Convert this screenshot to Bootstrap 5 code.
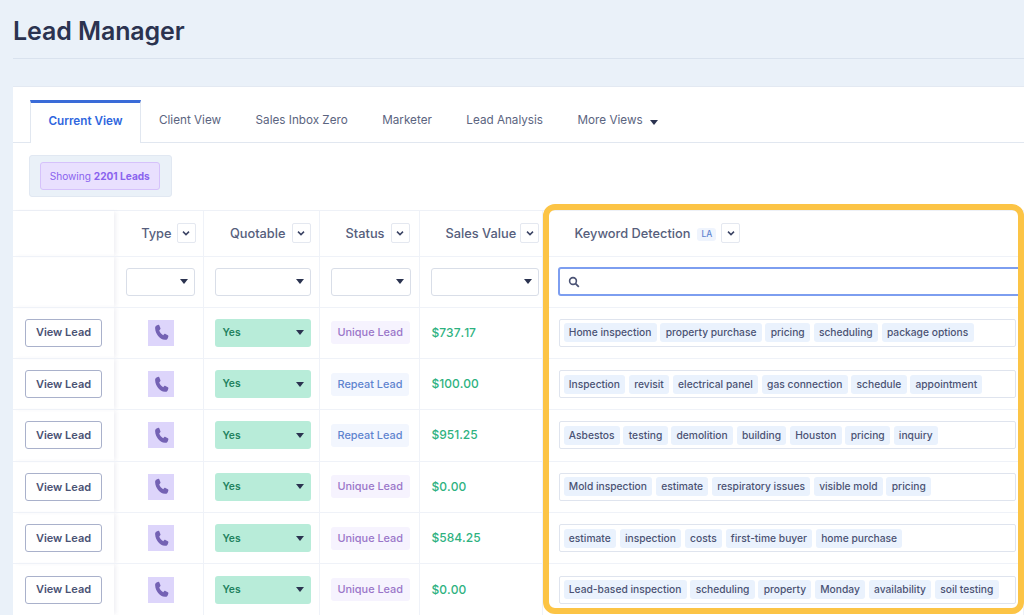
<!DOCTYPE html>
<html lang="en">
<head>
<meta charset="utf-8">
<title>Lead Manager</title>
<link href="https://cdn.jsdelivr.net/npm/bootstrap@5.3.0/dist/css/bootstrap.min.css" rel="stylesheet">
<style>
html,body{height:615px;overflow:hidden}
body{background:#eaf1f9;font-family:Inter,"Liberation Sans",sans-serif;color:#4a5274;position:relative}
.page-head{margin-left:13px;height:59px;border-bottom:1px solid #d9e2ee;display:flex;align-items:flex-start}
.page-head h1{font-size:25px;line-height:30px;font-weight:600;color:#2b3350;margin:16px 0 0;letter-spacing:-.1px}
.panel{margin:27px 0 0 13px;background:#fff;border-top:1px solid #e3e9f2;height:529px;overflow:hidden}
.view-tabs{padding:13px 0 0 17px;height:56px;border-bottom:1px solid #e1e7f0;flex-wrap:nowrap}
.view-tabs .nav-link{border:0;border-radius:0;padding:0;height:41px;display:flex;align-items:center;font-size:11.7px;color:#5b6480;background:none;margin-right:34.5px;white-space:nowrap}
.view-tabs .nav-link.active{width:111px;height:43px;margin-right:18px;justify-content:center;font-weight:600;color:#2f66de;border:1px solid #e1e7f0;border-bottom:0;border-top:3px solid #3a6bd8;background:#fff;padding-bottom:2px}
.caret-dn{display:inline-block;border:4px solid transparent;border-top:5px solid #2b3350;border-bottom:0}
.more-caret{margin-left:7px;margin-top:4px}
.count-wrap{margin:12px 0 0 16px;display:inline-block;background:#eaf1f8;border:1px solid #e1e8f2;border-radius:3px;padding:6px 11px 6px 10px}
.count-box{display:block;background:#e9e0fe;border:1px solid #d6c2fb;border-radius:3px;color:#8a63ee;font-size:10.1px;line-height:26px;padding:0 8.800px}
.count-box b{font-weight:700}
.grid-wrap{margin-top:13px;border-top:1px solid #eef1f7}
.lead-grid{table-layout:fixed;width:1011px;border-collapse:collapse;margin:0}
.lead-grid td,.lead-grid th{border-bottom:1px solid #eff2f8;border-right:1px solid #eff2f8;padding:0;vertical-align:middle;font-weight:400}
.lead-grid tr{height:51.4px}
.lead-grid tr.hd-row{height:45px}
.lead-grid tr.flt-row{height:51px}
.lead-grid .first{border-right:0;box-shadow:3px 0 4px -1px rgba(60,70,110,.08)}
.hd-cell{display:flex;align-items:center;justify-content:flex-end;gap:6px;padding-right:8px;font-size:12.8px;font-weight:500;color:#565e7c;height:100%}
.hd-type{padding-right:7px;gap:5px}
.hd-status{padding-right:9px}
.hd-sales{justify-content:flex-start;padding:0 0 0 26px;white-space:nowrap;gap:4px}
.hd-btn{width:19px;height:20px;border:1px solid #e4e8f0;border-radius:2px;background:#fff;display:flex;align-items:center;justify-content:center;padding:0;flex:none}
.flt-sel{height:28px;border:1px solid #d9dee8;border-radius:3px;background:#fff;display:flex;align-items:center;justify-content:flex-end;padding-right:6px;margin:0 8px 0 11px}
.flt-type{margin-left:12px}
.flt-sales{margin-right:3px}
.view-btn{width:77px;height:28px;margin-left:12px;padding:0;font-size:11px;font-weight:600;color:#4a5274;border:1px solid #a9b1cb;border-radius:3px;background:#fff;display:flex;align-items:center;justify-content:center}
.phone-tile{width:26px;height:26px;background:#ddd5fb;display:flex;align-items:center;justify-content:center;margin-left:34px}
.yes-sel{height:28px;margin:0 8px 0 11px;background:#b8ecd9;border-radius:3px;display:flex;align-items:center;justify-content:space-between;padding:0 7px 0 8px;font-size:10.3px;font-weight:600;color:#23825f}
.lead-tag{display:block;width:fit-content;margin-left:11.5px;padding:0 6.5px;line-height:23px;border-radius:3px;font-size:10.9px;font-weight:500}
.tag-unique{background:#f6f3fe;color:#9a76c9}
.tag-repeat{background:#f2f6fe;color:#5f84cf}
.lead-grid td.money{padding-left:12px;font-size:12px;font-weight:500;color:#2eb27f;font-kerning:none}
.kw-hd{display:flex;align-items:center;padding:0 0 0 32px;font-size:12.8px;font-weight:500;color:#565e7c;height:100%}
.la-tag{font-size:8.5px;color:#5f84cf;background:#eff4fd;border-radius:3px;line-height:13px;padding:0 4px;margin:2px 5px 0 7px}
.kw-search{margin:0 -14px 0 15px;height:29px;border:2px solid #7d9ef0;border-radius:3px;background:#fff;display:flex;align-items:center;padding-left:8px}
.kw-box{margin:0 7px 0 16px;height:28px;border:1px solid #dfe4ee;border-radius:2px;display:flex;align-items:center;gap:3.6px;padding-left:4px;white-space:nowrap;overflow:hidden}
.kw{background:#eaf2fd;color:#4a5274;font-size:10.25px;font-weight:500;line-height:19px;padding:0 5.3px;border-radius:3px;flex:none}
.focus-frame{position:absolute;left:543px;top:204px;width:481px;height:410px;border:6px solid #fcc445;border-radius:12px;pointer-events:none}
</style>
</head>
<body>
<svg width="0" height="0" class="position-absolute"><defs>
<symbol id="ph" viewBox="0 0 16 16"><path d="M3.400 1.300 5 .8c.4-.1.8.1 1 .5l1 2.700c.2.400.1.800-.2 1L5.900 6.200c.6 1.900 2 3.500 3.700 4.400l1-1.100c.3-.3.700-.4 1.100-.2l2.300 1.200c.4.200.6.600.5 1l-.5 1.600c-.4 1.200-1.400 2-2.700 1.800C6.300 14.700 2.300 9.500 2 4.100c-.1-1.200.3-2.400 1.400-2.800z" fill="#7462b4"/></symbol>
<symbol id="chev" viewBox="0 0 10 10"><path d="M2 3.600 5 6.600 8 3.600" fill="none" stroke="#3b4464" stroke-width="1.500"/></symbol>
</defs></svg>

<header class="page-head"><h1>Lead Manager</h1></header>

<main class="panel">
  <ul class="nav nav-tabs view-tabs">
    <li class="nav-item"><a class="nav-link active" href="#">Current View</a></li>
    <li class="nav-item"><a class="nav-link" href="#">Client View</a></li>
    <li class="nav-item"><a class="nav-link" href="#">Sales Inbox Zero</a></li>
    <li class="nav-item"><a class="nav-link" href="#">Marketer</a></li>
    <li class="nav-item"><a class="nav-link" href="#">Lead Analysis</a></li>
    <li class="nav-item"><a class="nav-link" href="#">More Views<span class="caret-dn more-caret"></span></a></li>
  </ul>
  <div class="count-wrap"><span class="count-box">Showing <b>2201 Leads</b></span></div>
  <div class="grid-wrap">
  <table class="lead-grid">
    <colgroup><col style="width:101px"><col style="width:89px"><col style="width:116px"><col style="width:100px"><col style="width:123px"><col></colgroup>
    <thead>
      <tr class="hd-row">
        <th class="first"></th>
        <th><div class="hd-cell hd-type">Type<span class="hd-btn"><svg width="10" height="10"><use href="#chev"/></svg></span></div></th>
        <th><div class="hd-cell">Quotable<span class="hd-btn"><svg width="10" height="10"><use href="#chev"/></svg></span></div></th>
        <th><div class="hd-cell hd-status">Status<span class="hd-btn"><svg width="10" height="10"><use href="#chev"/></svg></span></div></th>
        <th><div class="hd-cell hd-sales">Sales Value<span class="hd-btn"><svg width="10" height="10"><use href="#chev"/></svg></span></div></th>
        <th><div class="kw-hd">Keyword Detection<span class="la-tag">LA</span><span class="hd-btn"><svg width="10" height="10"><use href="#chev"/></svg></span></div></th>
      </tr>
      <tr class="flt-row">
        <td class="first"></td>
        <td><div class="flt-sel flt-type"><span class="caret-dn"></span></div></td>
        <td><div class="flt-sel"><span class="caret-dn"></span></div></td>
        <td><div class="flt-sel"><span class="caret-dn"></span></div></td>
        <td><div class="flt-sel flt-sales"><span class="caret-dn"></span></div></td>
        <td><div class="kw-search"><svg width="12" height="12" viewBox="0 0 12 12"><circle cx="5" cy="5" r="3.400" fill="none" stroke="#4a5274" stroke-width="1.600"/><path d="M7.600 7.600 10.800 10.800" stroke="#4a5274" stroke-width="1.800"/></svg></div></td>
      </tr>
    </thead>
    <tbody>
      <tr>
        <td class="first"><button class="view-btn">View Lead</button></td>
        <td><div class="phone-tile"><svg width="17" height="17"><use href="#ph"/></svg></div></td>
        <td><div class="yes-sel">Yes<span class="caret-dn"></span></div></td>
        <td><span class="lead-tag tag-unique">Unique Lead</span></td>
        <td class="money">$737.17</td>
        <td><div class="kw-box"><span class="kw">Home inspection</span><span class="kw">property purchase</span><span class="kw">pricing</span><span class="kw">scheduling</span><span class="kw">package options</span></div></td>
      </tr>
      <tr>
        <td class="first"><button class="view-btn">View Lead</button></td>
        <td><div class="phone-tile"><svg width="17" height="17"><use href="#ph"/></svg></div></td>
        <td><div class="yes-sel">Yes<span class="caret-dn"></span></div></td>
        <td><span class="lead-tag tag-repeat">Repeat Lead</span></td>
        <td class="money">$100.00</td>
        <td><div class="kw-box"><span class="kw">Inspection</span><span class="kw">revisit</span><span class="kw">electrical panel</span><span class="kw">gas connection</span><span class="kw">schedule</span><span class="kw">appointment</span></div></td>
      </tr>
      <tr>
        <td class="first"><button class="view-btn">View Lead</button></td>
        <td><div class="phone-tile"><svg width="17" height="17"><use href="#ph"/></svg></div></td>
        <td><div class="yes-sel">Yes<span class="caret-dn"></span></div></td>
        <td><span class="lead-tag tag-repeat">Repeat Lead</span></td>
        <td class="money">$951.25</td>
        <td><div class="kw-box"><span class="kw">Asbestos</span><span class="kw">testing</span><span class="kw">demolition</span><span class="kw">building</span><span class="kw">Houston</span><span class="kw">pricing</span><span class="kw">inquiry</span></div></td>
      </tr>
      <tr>
        <td class="first"><button class="view-btn">View Lead</button></td>
        <td><div class="phone-tile"><svg width="17" height="17"><use href="#ph"/></svg></div></td>
        <td><div class="yes-sel">Yes<span class="caret-dn"></span></div></td>
        <td><span class="lead-tag tag-unique">Unique Lead</span></td>
        <td class="money">$0.00</td>
        <td><div class="kw-box"><span class="kw">Mold inspection</span><span class="kw">estimate</span><span class="kw">respiratory issues</span><span class="kw">visible mold</span><span class="kw">pricing</span></div></td>
      </tr>
      <tr>
        <td class="first"><button class="view-btn">View Lead</button></td>
        <td><div class="phone-tile"><svg width="17" height="17"><use href="#ph"/></svg></div></td>
        <td><div class="yes-sel">Yes<span class="caret-dn"></span></div></td>
        <td><span class="lead-tag tag-unique">Unique Lead</span></td>
        <td class="money">$584.25</td>
        <td><div class="kw-box"><span class="kw">estimate</span><span class="kw">inspection</span><span class="kw">costs</span><span class="kw">first-time buyer</span><span class="kw">home purchase</span></div></td>
      </tr>
      <tr>
        <td class="first"><button class="view-btn">View Lead</button></td>
        <td><div class="phone-tile"><svg width="17" height="17"><use href="#ph"/></svg></div></td>
        <td><div class="yes-sel">Yes<span class="caret-dn"></span></div></td>
        <td><span class="lead-tag tag-unique">Unique Lead</span></td>
        <td class="money">$0.00</td>
        <td><div class="kw-box"><span class="kw">Lead-based inspection</span><span class="kw">scheduling</span><span class="kw">property</span><span class="kw">Monday</span><span class="kw">availability</span><span class="kw">soil testing</span></div></td>
      </tr>
    </tbody>
  </table>
  </div>
</main>
<div class="focus-frame"></div>
<script src="https://cdn.jsdelivr.net/npm/bootstrap@5.3.0/dist/js/bootstrap.bundle.min.js"></script>
</body>
</html>
